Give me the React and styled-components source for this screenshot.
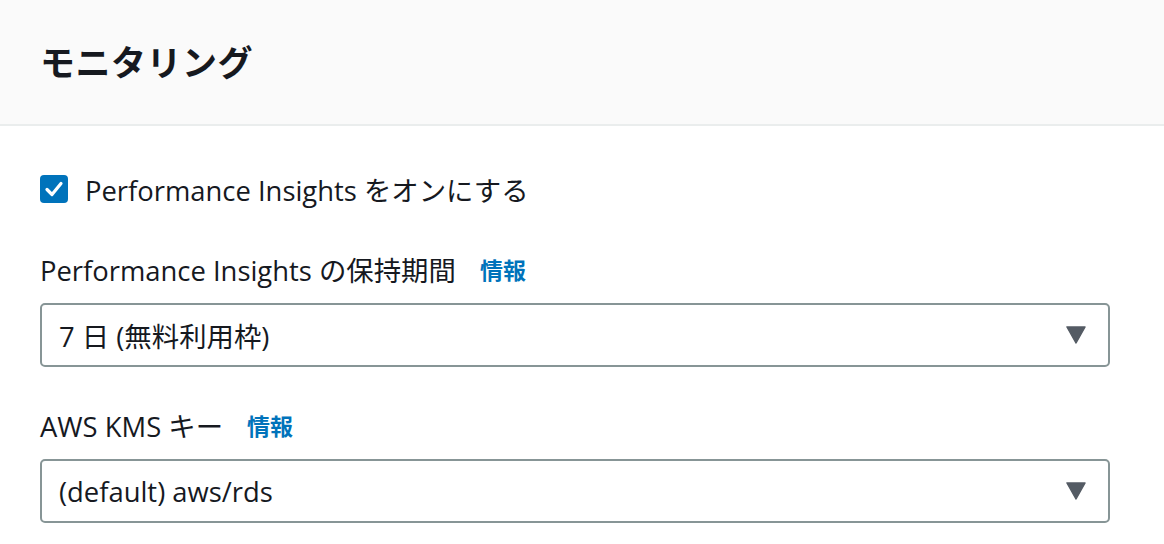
import React from 'react'
import styled, { createGlobalStyle } from 'styled-components'

const GlobalStyle = createGlobalStyle`
  html, body {
    margin: 0;
    padding: 0;
    background: #fff;
  }
  body {
    font-family: "Open Sans", "Noto Sans CJK JP", sans-serif;
    color: #16191f;
  }
`

const Panel = styled.section`
  width: 1164px;
  height: 544px;
  overflow: hidden;
  background: #fff;
`

const Header = styled.header`
  height: 124px;
  display: flex;
  align-items: center;
  padding: 0 40px;
  background: #fafafa;
  border-bottom: 2px solid #eaeded;
  box-sizing: content-box;
`

const Title = styled.h2`
  margin: 0 0 4px;
  font-family: "Noto Sans CJK JP", sans-serif;
  font-size: 35px;
  font-weight: 700;
  letter-spacing: 0.5px;
  color: #16191f;
`

const Body = styled.div`
  display: flex;
  flex-direction: column;
  padding: 48px 54px 0 40px;
`

const CheckRow = styled.label`
  display: flex;
  align-items: center;
  gap: 17px;
  height: 30px;
  font-size: 27.4px;
`

const Box = styled.span`
  width: 28px;
  height: 28px;
  border-radius: 4px;
  background: #0073bb;
  display: flex;
  align-items: center;
  justify-content: center;
`

const Field = styled.div`
  display: flex;
  flex-direction: column;
  margin-top: ${({ top }) => top}px;
`

const Label = styled.div`
  display: flex;
  align-items: center;
  height: 36px;
  margin-bottom: 16px;
  font-size: 27.4px;
`

const Info = styled.a`
  margin-left: 24px;
  font-family: "Noto Sans CJK JP", sans-serif;
  font-size: 23px;
  font-weight: 700;
  color: #0073bb;
  text-decoration: none;
`

const Select = styled.div`
  height: 60px;
  display: flex;
  align-items: center;
  justify-content: space-between;
  padding: 0 22px 0 17px;
  border: 2px solid #879596;
  border-radius: 5px;
  font-size: 27.4px;
`

const Caret = () => (
  <svg width="20" height="18" viewBox="0 0 20 18">
    <path d="M1 1 H19 L10 17 Z" fill="#545b64" stroke="#545b64" strokeWidth="1.5" strokeLinejoin="round" />
  </svg>
)

const Check = () => (
  <svg width="20" height="20" viewBox="0 0 20 20">
    <path d="M3 10.5 L8 15.5 L17 4.5" fill="none" stroke="#fff" strokeWidth="3.2" strokeLinecap="round" strokeLinejoin="round" />
  </svg>
)

const App = () => (
  <Panel>
    <GlobalStyle />
    <Header>
      <Title>モニタリング</Title>
    </Header>
    <Body>
      <CheckRow>
        <Box><Check /></Box>
        <span>Performance Insights をオンにする</span>
      </CheckRow>

      <Field top={47}>
        <Label>
          Performance Insights の保持期間
          <Info href="#">情報</Info>
        </Label>
        <Select>
          <span>7 日 (無料利用枠)</span>
          <Caret />
        </Select>
      </Field>

      <Field top={40}>
        <Label>
          AWS KMS キー
          <Info href="#">情報</Info>
        </Label>
        <Select>
          <span>(default) aws/rds</span>
          <Caret />
        </Select>
      </Field>
    </Body>
  </Panel>
)

export default App
